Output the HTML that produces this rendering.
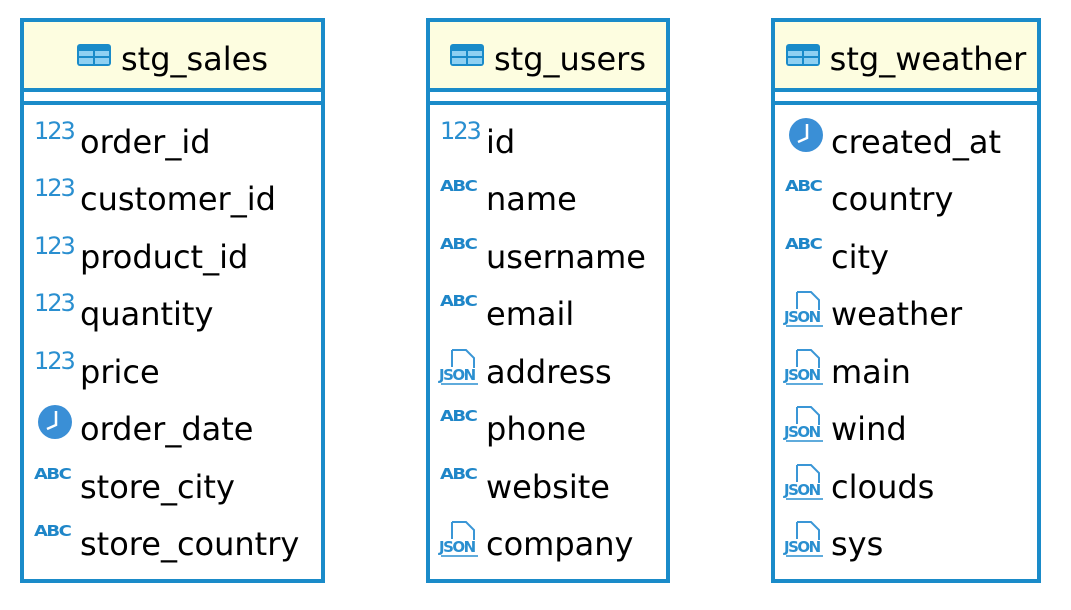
<!DOCTYPE html>
<html><head><style>
body{margin:0;width:1071px;height:610px;background:#fff;position:relative;overflow:hidden;font-family:"Segoe UI","DejaVu Sans","Liberation Sans",sans-serif;}
.box{position:absolute;top:18px;height:557px;border:4px solid #1a8bc9;background:#fff;box-sizing:content-box}
.hd{position:absolute;left:0;right:0;top:0;height:70px;background:#fdfde0;border-bottom:4px solid #1a8bc9;display:flex;align-items:center;justify-content:center;font-size:32px;color:#000;padding-top:8px;box-sizing:border-box}
.hd svg{margin-right:10px;margin-top:-8px}
.sep{position:absolute;left:0;right:0;top:79px;height:4px;background:#1a8bc9}
.row{position:absolute;left:8px;height:40px;display:flex;align-items:center;font-size:32px;color:#000;white-space:nowrap}
.ic{width:48px;height:30px;position:relative;flex:none;margin-right:0}
.n{color:#2a8fd0;font-size:24px;font-family:"DejaVu Sans",sans-serif;position:absolute;top:-10px;left:2px;letter-spacing:-2px}
.a{color:#1f86c8;font-size:18px;font-weight:900;font-family:"DejaVu Sans",sans-serif;position:absolute;top:-8px;left:2px;letter-spacing:-1.5px;transform:scaleY(0.85)}
</style></head><body>
<svg width="0" height="0" style="position:absolute"><defs>
<g id="tb"><rect x="0" y="0" width="34" height="22" rx="3" fill="#1a8bc9"/><rect x="2" y="7" width="14" height="5" fill="#8fd0f2"/><rect x="18" y="7" width="14" height="5" fill="#8fd0f2"/><rect x="2" y="14" width="14" height="6" fill="#8fd0f2"/><rect x="18" y="14" width="14" height="6" fill="#8fd0f2"/></g>
<g id="ck"><circle cx="17" cy="17" r="17" fill="#3a8fd6"/><path d="M18 6 V20 L9 24" stroke="#fff" stroke-width="2.5" fill="none"/></g>
<g id="js"><path d="M14 3 H28 L36 11 V21 M14 3 V20" stroke="#3a96d6" stroke-width="2" fill="none"/><text x="1" y="33" font-size="15" font-weight="bold" fill="#2a8fd0" font-family="DejaVu Sans" letter-spacing="-1.5">JSON</text><path d="M3 37 H40" stroke="#2a8fd0" stroke-width="1.5"/></g>
</defs></svg>

<div class="box" style="left:20px;width:297px">
<div class="hd"><svg width="34" height="22"><use href="#tb"/></svg>stg_sales</div><div class="sep"></div>
<div class="row" style="top:100px"><div class="ic"><span class="n">123</span></div>order_id</div>
<div class="row" style="top:157px"><div class="ic"><span class="n">123</span></div>customer_id</div>
<div class="row" style="top:215px"><div class="ic"><span class="n">123</span></div>product_id</div>
<div class="row" style="top:272px"><div class="ic"><span class="n">123</span></div>quantity</div>
<div class="row" style="top:330px"><div class="ic"><span class="n">123</span></div>price</div>
<div class="row" style="top:387px"><div class="ic"><svg width="34" height="34" style="position:absolute;top:-9px;left:6px"><use href="#ck"/></svg></div>order_date</div>
<div class="row" style="top:445px"><div class="ic"><span class="a">ABC</span></div>store_city</div>
<div class="row" style="top:502px"><div class="ic"><span class="a">ABC</span></div>store_country</div>
</div>

<div class="box" style="left:426px;width:236px">
<div class="hd"><svg width="34" height="22"><use href="#tb"/></svg>stg_users</div><div class="sep"></div>
<div class="row" style="top:100px"><div class="ic"><span class="n">123</span></div>id</div>
<div class="row" style="top:157px"><div class="ic"><span class="a">ABC</span></div>name</div>
<div class="row" style="top:215px"><div class="ic"><span class="a">ABC</span></div>username</div>
<div class="row" style="top:272px"><div class="ic"><span class="a">ABC</span></div>email</div>
<div class="row" style="top:330px"><div class="ic"><svg width="42" height="40" style="position:absolute;top:-10px;left:0"><use href="#js"/></svg></div>address</div>
<div class="row" style="top:387px"><div class="ic"><span class="a">ABC</span></div>phone</div>
<div class="row" style="top:445px"><div class="ic"><span class="a">ABC</span></div>website</div>
<div class="row" style="top:502px"><div class="ic"><svg width="42" height="40" style="position:absolute;top:-10px;left:0"><use href="#js"/></svg></div>company</div>
</div>

<div class="box" style="left:771px;width:262px">
<div class="hd"><svg width="34" height="22"><use href="#tb"/></svg>stg_weather</div><div class="sep"></div>
<div class="row" style="top:100px"><div class="ic"><svg width="34" height="34" style="position:absolute;top:-9px;left:6px"><use href="#ck"/></svg></div>created_at</div>
<div class="row" style="top:157px"><div class="ic"><span class="a">ABC</span></div>country</div>
<div class="row" style="top:215px"><div class="ic"><span class="a">ABC</span></div>city</div>
<div class="row" style="top:272px"><div class="ic"><svg width="42" height="40" style="position:absolute;top:-10px;left:0"><use href="#js"/></svg></div>weather</div>
<div class="row" style="top:330px"><div class="ic"><svg width="42" height="40" style="position:absolute;top:-10px;left:0"><use href="#js"/></svg></div>main</div>
<div class="row" style="top:387px"><div class="ic"><svg width="42" height="40" style="position:absolute;top:-10px;left:0"><use href="#js"/></svg></div>wind</div>
<div class="row" style="top:445px"><div class="ic"><svg width="42" height="40" style="position:absolute;top:-10px;left:0"><use href="#js"/></svg></div>clouds</div>
<div class="row" style="top:502px"><div class="ic"><svg width="42" height="40" style="position:absolute;top:-10px;left:0"><use href="#js"/></svg></div>sys</div>
</div>
</body></html>
